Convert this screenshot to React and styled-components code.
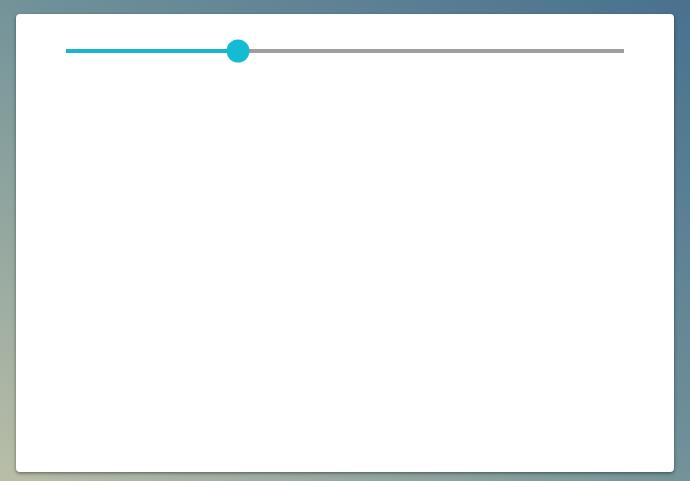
import React, { useState } from "react";
import styled, { createGlobalStyle } from "styled-components";

const GlobalStyle = createGlobalStyle`
  html, body {
    margin: 0;
    padding: 0;
    height: 100%;
  }
  body {
    font-family: "Roboto", "Liberation Sans", sans-serif;
    background: linear-gradient(to bottom left, #49718f 0%, #6c8f98 45%, #b9bea7 100%);
    background-attachment: fixed;
  }
  #root {
    min-height: 100%;
  }
`;

const Page = styled.div`
  box-sizing: border-box;
  height: 481px;
  padding: 14px 16px 9px;
`;

const Card = styled.div`
  box-sizing: border-box;
  height: 100%;
  background: #fff;
  border-radius: 4px;
  box-shadow: 0 1px 3px rgba(0, 0, 0, 0.35), 0 2px 4px rgba(0, 0, 0, 0.15);
  padding: 25px 50px;
`;

const SliderRoot = styled.div`
  position: relative;
  height: 24px;
  display: flex;
  align-items: center;
  cursor: pointer;
`;

const Track = styled.div`
  position: relative;
  flex: 1;
  height: 4px;
  background: #9e9e9e;
`;

const Fill = styled.div`
  position: absolute;
  left: 0;
  top: 0;
  bottom: 0;
  background: #19b5c9;
`;

const Thumb = styled.div`
  position: absolute;
  top: 50%;
  width: 23px;
  height: 23px;
  border-radius: 50%;
  background: #13bcd3;
  transform: translate(-50%, -50%);
`;

const Slider = ({ value, onChange }) => {
  const handle = (e) => {
    const rect = e.currentTarget.getBoundingClientRect();
    const v = ((e.clientX - rect.left) / rect.width) * 100;
    onChange(Math.max(0, Math.min(100, v)));
  };
  return (
    <SliderRoot onMouseDown={handle}>
      <Track>
        <Fill style={{ width: `${value}%` }} />
        <Thumb style={{ left: `${value}%` }} />
      </Track>
    </SliderRoot>
  );
};

export default function App() {
  const [value, setValue] = useState(30.9);
  return (
    <>
      <GlobalStyle />
      <Page>
        <Card>
          <Slider value={value} onChange={setValue} />
        </Card>
      </Page>
    </>
  );
}
